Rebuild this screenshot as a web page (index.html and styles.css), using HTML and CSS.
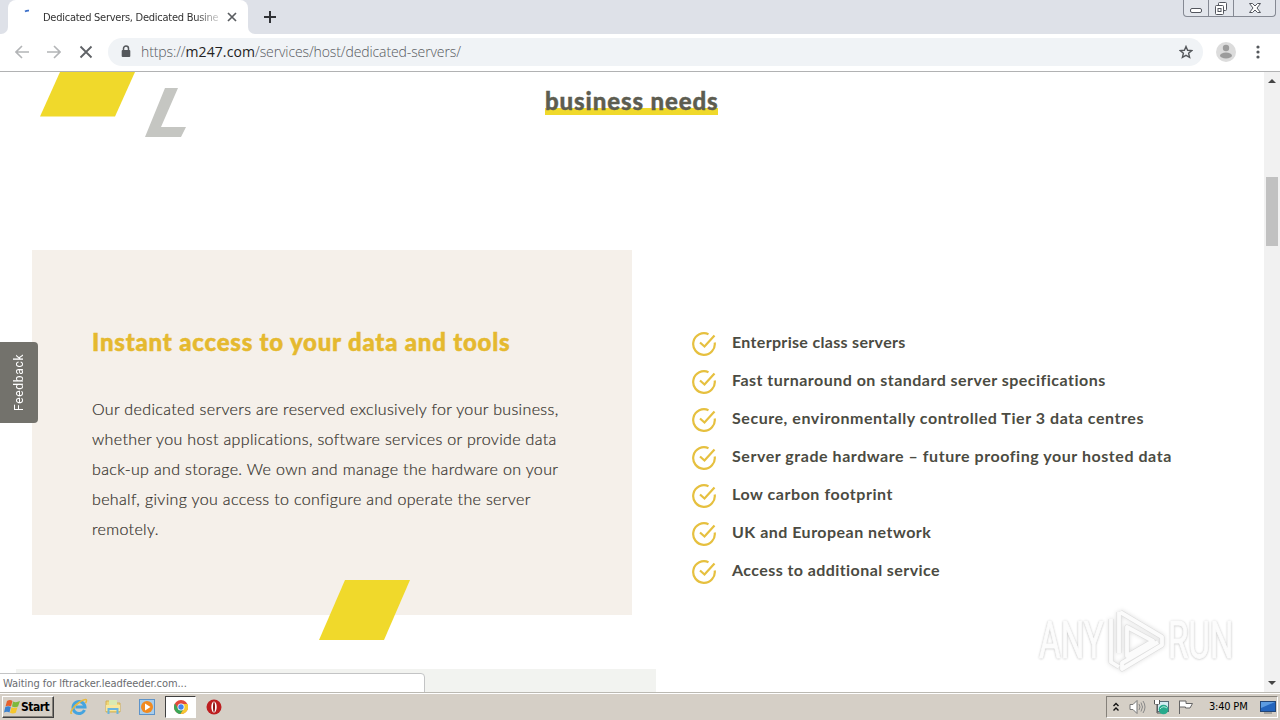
FILE: index.html
```html
<!DOCTYPE html>
<html lang="en">
<head>
    <meta charset="UTF-8">
    <meta name="viewport" content="width=device-width, initial-scale=1.0">
    <title>Dedicated Servers, Dedicated Business Servers</title>
    <link rel="stylesheet" href="styles.css">
</head>
<body>
    <!-- Tab strip -->
    <header class="tab-strip">
        <div class="tab-edge"></div>
        <div class="tab">
            <svg class="spinner" width="16" height="16" viewBox="0 0 16 16"><path d="M6 3.500Q7.500 2.500 10 2.700" fill="none" stroke="#3b6fc9" stroke-width="1.800"/></svg>
            <span class="tab-title">Dedicated Servers, Dedicated Busine</span>
            <svg class="tab-close" width="10" height="10" viewBox="0 0 10 10"><path d="M1 1l8 8M9 1L1 9" stroke="#5a5d61" stroke-width="1.700"/></svg>
        </div>
        <div class="tab-rest">
            <svg width="12" height="12" viewBox="0 0 12 12"><path d="M6 0v12M0 6h12" stroke="#303236" stroke-width="2"/></svg>
        </div>
        <div class="window-buttons">
            <span class="win-btn win-min"><svg width="13" height="17" viewBox="0 0 13 17"><rect x=".5" y="8.500" width="11" height="4" rx="1.500" fill="#fff" stroke="#53565e"/></svg></span>
            <span class="win-btn win-max"><svg width="14" height="17" viewBox="0 0 14 17"><rect x="4.500" y="2.500" width="8" height="8" rx="1" fill="#fff" stroke="#53565e"/><rect x="1.500" y="5.500" width="8" height="9" rx="1" fill="#fff" stroke="#53565e"/><rect x="4" y="8.500" width="3" height="3" fill="none" stroke="#53565e"/></svg></span>
            <span class="win-btn win-close"><svg width="12" height="17" viewBox="0 0 12 17"><path d="M.5 3.500h3L6 6l2.500-2.500h3L8 8l3.500 4.500h-3L6 10l-2.500 2.500h-3L4 8z" fill="#fff" stroke="#53565e"/></svg></span>
        </div>
    </header>

    <!-- Toolbar -->
    <nav class="toolbar">
        <svg class="nav-icon" width="14" height="14" viewBox="0 0 14 14"><path d="M14 7H1M7 1L1 7l6 6" fill="none" stroke="#b3b5b7" stroke-width="1.600"/></svg>
        <svg class="nav-icon" width="14" height="14" viewBox="0 0 14 14"><path d="M0 7h13M7 1l6 6-6 6" fill="none" stroke="#b3b5b7" stroke-width="1.600"/></svg>
        <svg class="nav-icon" width="14" height="14" viewBox="0 0 14 14"><path d="M1.500 1.500l11 11M12.500 1.500l-11 11" stroke="#5f6266" stroke-width="1.800"/></svg>
        <div class="omnibox">
            <svg width="10" height="13" viewBox="0 0 10 13"><path d="M2.500 5.500V3.500a2.500 2.500 0 0 1 5 0v2" fill="none" stroke="#55585c" stroke-width="1.500"/><rect x=".7" y="5" width="8.600" height="7" rx="1" fill="#55585c"/></svg>
            <span class="url">https://<b>m247.com</b>/services/host/dedicated-servers/</span>
            <svg class="star" width="14" height="14" viewBox="1 1 14 14"><path d="M8 2.500l1.600 3.800 4.200.3-3.200 2.700 1 4.100L8 11.300l-3.600 2.100 1-4.100-3.200-2.700 4.200-.3z" fill="none" stroke="#55585c" stroke-width="1.400"/></svg>
        </div>
        <svg class="avatar" width="20" height="20" viewBox="0 0 20 20"><circle cx="10" cy="10" r="10" fill="#dcdcdc"/><circle cx="10" cy="6" r="3.200" fill="#9c9c9c"/><ellipse cx="10" cy="13.500" rx="6" ry="3" fill="#9c9c9c"/></svg>
        <svg class="menu-dots" width="4" height="14" viewBox="0 0 4 14"><circle cx="2" cy="2" r="1.600" fill="#55585c"/><circle cx="2" cy="7" r="1.600" fill="#55585c"/><circle cx="2" cy="12" r="1.600" fill="#55585c"/></svg>
    </nav>

    <!-- Page -->
    <div class="viewport">
        <main class="page">
            <section class="intro">
                <svg class="intro-shapes" width="160" height="66" viewBox="0 0 160 66"><path d="M20 0h75L75 44.500H0z" fill="#f0d92b"/><path d="M125 16h13l-17 39h25l-5 10h-36z" fill="#c5c6c2"/></svg>
                <h2 class="intro-title">business needs</h2>
            </section>

            <section class="features">
                <div class="card">
                    <h3>Instant access to your data and tools</h3>
                    <p>Our dedicated servers are reserved exclusively for your business,<br>
                    whether you host applications, software services or provide data<br>
                    back-up and storage. We own and manage the hardware on your<br>
                    behalf, giving you access to configure and operate the server<br>
                    remotely.</p>
                    <svg class="card-shape" width="91" height="60" viewBox="0 0 91 60"><path d="M26 0h65L65 60H0z" fill="#f0d92b"/></svg>
                </div>
                <ul class="checklist">
                    <li class="first"><svg class="check" viewBox="0 0 24 24"><use href="#tick"/></svg><span>Enterprise class servers</span></li>
                    <li><svg class="check" viewBox="0 0 24 24"><use href="#tick"/></svg><span>Fast turnaround on standard server specifications</span></li>
                    <li class="wide"><svg class="check" viewBox="0 0 24 24"><use href="#tick"/></svg><span>Secure, environmentally controlled Tier 3 data centres</span></li>
                    <li class="wide"><svg class="check" viewBox="0 0 24 24"><use href="#tick"/></svg><span>Server grade hardware – future proofing your hosted data</span></li>
                    <li class="wide"><svg class="check" viewBox="0 0 24 24"><use href="#tick"/></svg><span>Low carbon footprint</span></li>
                    <li><svg class="check" viewBox="0 0 24 24"><use href="#tick"/></svg><span>UK and European network</span></li>
                    <li class="last"><svg class="check" viewBox="0 0 24 24"><use href="#tick"/></svg><span>Access to additional service</span></li>
                </ul>
            </section>

            <section class="next-band"></section>

            <div class="feedback">Feedback</div>
            <div class="status">Waiting for lftracker.leadfeeder.com...</div>

            <div class="watermark">
                <span>ANY</span>
                <svg width="58" height="64" viewBox="0 0 58 64" fill="none" stroke-linejoin="round"><g stroke="#dedede" stroke-width="5"><path d="M12 3v41M4 10v43l8 5M13 3l42 25v8L15 60v-6l36-21M20 18v29l26-15z"/></g><path d="M12 3v41M4 10v43l8 5M13 3l42 25v8L15 60v-6l36-21M20 18v29l26-15z" stroke="#fbfbfb" stroke-width="3.800"/></svg>
                <span>RUN</span>
            </div>
        </main>
        <aside class="scrollbar">
            <svg width="8" height="4" viewBox="0 0 8 4"><path d="M0 4l4-4 4 4z" fill="#454545"/></svg>
            <div class="thumb"></div>
            <svg class="down" width="8" height="4" viewBox="0 0 8 4"><path d="M0 0l4 4 4-4z" fill="#454545"/></svg>
        </aside>
    </div>

    <!-- Taskbar -->
    <footer class="taskbar">
        <div class="start">
            <svg width="17" height="16" viewBox="0 0 17 16"><path d="M3 2q3-2 5.500 0L7 7.500Q4 6 1.500 7.500z" fill="#e6602c"/><path d="M9 2.500q3 1.500 7-.5l-2 5.500q-3 1.500-6 0z" fill="#7db93d"/><path d="M1.300 8q3-1.500 5.500 0l-1.300 5.500Q3 12 0 13.500z" fill="#3c82cf"/><path d="M7.500 8.300q3 1.500 6 0l-1.700 5.500q-3 1.500-5.800 0z" fill="#f5c62c"/></svg>
            Start
        </div>
        <div class="launch">
            <svg width="18" height="18" viewBox="0 0 18 18"><path d="M14.500 12a6 6 0 1 1 .5-3H5.500" fill="none" stroke="#45a4df" stroke-width="3"/><path d="M2 15C-1 17 2 9 9 4.500S18 1 15.500 5" fill="none" stroke="#e9b93b" stroke-width="1.500"/></svg>
            <svg width="18" height="18" viewBox="0 0 18 18"><path d="M2 3h5l1 2h8v9H2z" fill="#f0d777" stroke="#d2b054"/><path d="M5 2h8v5H5z" fill="#d9eab2"/><path d="M2 7h14v6H2z" fill="#f8e79c"/><path d="M4.500 16v-5h9v5" fill="none" stroke="#69b5df" stroke-width="2"/></svg>
            <svg width="18" height="18" viewBox="0 0 18 18"><rect x="1.500" y="1.500" width="15" height="15" fill="#a8cdeb" stroke="#5d93c9"/><circle cx="9" cy="9" r="6" fill="#f18a20"/><path d="M7 5.500v7l5.500-3.500z" fill="#fff"/></svg>
            <span class="active-app"><svg width="14" height="14" viewBox="1 1 14 14"><circle cx="8" cy="8" r="7" fill="#e14a3b"/><path d="M1.900 4.600A7 7 0 0 0 7.500 15L11 9.500 8 8 5 9.500z" fill="#3aa757"/><path d="M14.400 5H8l3 4.500L7.500 15A7 7 0 0 0 14.400 5z" fill="#f6c932"/><circle cx="8" cy="8" r="3.500" fill="#fff"/><circle cx="8" cy="8" r="2.700" fill="#4384ef"/></svg></span>
            <svg width="18" height="18" viewBox="0 0 18 18"><circle cx="9" cy="9" r="7.500" fill="#bd1e20"/><ellipse cx="9" cy="9" rx="2.700" ry="5.500" fill="#fff"/><ellipse cx="9" cy="9" rx="1" ry="5" fill="#8c1515"/></svg>
        </div>
        <div class="tray">
            <svg width="8" height="10" viewBox="0 0 8 10"><path d="M1.500 4L4 1.500 6.500 4M1.500 8.500L4 6l2.500 2.500" fill="none" stroke="#111" stroke-width="1.400"/></svg>
            <svg class="speaker" width="17" height="16" viewBox="0 0 17 16"><path d="M1 5.500h3l4-4v13l-4-4H1z" fill="#fff" stroke="#777"/><path d="M10 5q2 3 0 6M12 3.500q3 4.500 0 9M14 2q4 6 0 12" fill="none" stroke="#888"/></svg>
            <svg class="network" width="17" height="16" viewBox="0 0 17 16"><rect x="4.500" y="2.500" width="11" height="10" fill="#d4edf2" stroke="#586b75"/><path d="M1.500 1v4h5V1M4 5v9h4" fill="none" stroke="#555"/><path d="M2 1h4v4H2z" fill="#fff"/><circle cx="10.500" cy="10.500" r="4.800" fill="#27aa8c"/><path d="M7 10q3-4 7-1" fill="none" stroke="#b2eadb"/></svg>
            <svg class="flag" width="17" height="16" viewBox="0 0 17 16"><path d="M2.500 15V1.500M3 2h6v2.500h6.500L13 9H8.500V8H3" fill="#fff" stroke="#666"/></svg>
            <span class="clock">3:40 PM</span>
            <svg class="desktop" width="16" height="14" viewBox="0 0 16 14"><rect x=".5" y="1.500" width="15" height="10" fill="#2465bd" stroke="#234676"/><path d="M1 2h14L1 8z" fill="#5d9ce1"/><path d="M4 13h8" stroke="#777"/></svg>
        </div>
    </footer>

    <svg class="defs" width="0" height="0">
        <defs>
            <g id="tick" fill="none" stroke="#e6c03f" stroke-width="2.200">
                <path d="M16.500 2.200A10.800 10.800 0 1 0 22.700 10.500"/>
                <path d="M8 10.500l4.500 4L22.500 3.500"/>
            </g>
        </defs>
    </svg>
</body>
</html>
```
FILE: styles.css
```css
* {
    box-sizing: border-box;
}
body {
    margin: 0;
    width: 1280px;
    height: 720px;
    overflow: hidden;
    display: flex;
    flex-direction: column;
    background: #fff;
    font-family: "DejaVu Sans Condensed", "DejaVu Sans", sans-serif;
    font-size: 11px;
}
svg {
    display: block;
    flex: none;
}
.defs {
    position: absolute;
}

/* Tab strip */
.tab-strip {
    height: 34px;
    flex: none;
    display: flex;
    background: #fff;
}
.tab-edge {
    width: 8px;
    background: #dee1e8;
    border-bottom-right-radius: 7px;
}
.tab {
    width: 240px;
    background: #fff;
    border-radius: 8px 8px 0 0;
    display: flex;
    align-items: center;
    padding-left: 11px;
    box-shadow: 0 -9px 0 #dee1e8;
}
.spinner {
    margin-top: -2px;
}
.tab-title {
    width: 177px;
    margin-left: 8px;
    white-space: nowrap;
    color: #333;
    letter-spacing: -0.26px;
    -webkit-mask-image: linear-gradient(to right, #000 86%, rgba(0,0,0,0.15));
    mask-image: linear-gradient(to right, #000 86%, rgba(0,0,0,0.15));
}
.tab-close {
    margin-left: 7px;
}
.tab-rest {
    flex: 1;
    background: #dee1e8;
    border-bottom-left-radius: 7px;
    padding: 11px 0 0 16px;
}
.window-buttons {
    background: #dee1e8;
    width: 97px;
    display: flex;
    align-items: flex-start;
}
.win-btn {
    height: 17px;
    border: 1px solid #858993;
    border-top: none;
    border-left-width: 0;
    display: flex;
    justify-content: center;
    background: #e3e6ec;
}
.win-min {
    width: 26px;
    border-left-width: 1px;
    border-bottom-left-radius: 4px;
}
.win-max {
    width: 25px;
}
.win-close {
    width: 42px;
    border-bottom-right-radius: 4px;
}

/* Toolbar */
.toolbar {
    height: 38px;
    flex: none;
    display: flex;
    align-items: center;
    padding-left: 15px;
    padding-bottom: 2px;
    border-bottom: 1px solid #b1b2b3;
}
.nav-icon {
    margin-right: 18px;
}
.omnibox {
    width: 1095px;
    height: 28px;
    margin-left: -3px;
    border-radius: 14px;
    background: #f0f3f6;
    display: flex;
    align-items: center;
    padding: 0 10px 0 13px;
}
.url {
    margin-left: 10px;
    font-family: "Open Sans", sans-serif;
    font-weight: 300;
    font-size: 14px;
    letter-spacing: -0.11px;
    color: #56595d;
}
.url b {
    font-weight: 400;
    letter-spacing: 0.1px;
    color: #222;
}
.star {
    margin-left: auto;
}
.avatar {
    margin-left: 13px;
}
.menu-dots {
    margin-left: 20px;
}

/* Page */
.viewport {
    height: 620px;
    flex: none;
    display: flex;
}
.page {
    position: relative;
    width: 1264px;
    overflow: hidden;
    font-family: Lato, sans-serif;
}
.intro {
    height: 178px;
    display: flex;
    align-items: flex-start;
}
.intro-shapes {
    margin-left: 40px;
}
.intro-title {
    margin: 15px 0 0 345px;
    height: 28px;
    width: 173px;
    white-space: nowrap;
    font-size: 24px;
    line-height: 27px;
    font-weight: 900;
    letter-spacing: 0.88px;
    -webkit-text-stroke: 0.4px #5d5d50;
    color: #5d5d50;
    background: linear-gradient(#f0d92b, #f0d92b) 0 21px / 100% 7px no-repeat;
}
.features {
    display: flex;
    padding-left: 32px;
}
.card {
    position: relative;
    width: 600px;
    height: 365px;
    padding: 76px 0 0 60px;
    background: #f5f0ea;
}
.card h3 {
    margin: 0;
    font-size: 24px;
    line-height: 31px;
    font-weight: 900;
    letter-spacing: 0.79px;
    -webkit-text-stroke: 0.5px #e5b92f;
    color: #e5b92f;
    white-space: nowrap;
}
.card p {
    margin: 37px 0 0;
    font-size: 16px;
    line-height: 30px;
    font-weight: 300;
    letter-spacing: 0.35px;
    -webkit-text-stroke: 0.2px #35322c;
    color: #35322c;
    white-space: nowrap;
}
.card-shape {
    position: absolute;
    left: 287px;
    bottom: -25px;
}
.checklist {
    list-style: none;
    margin: 74px 0 0 60px;
    padding: 0;
}
.checklist li {
    height: 38px;
    display: flex;
    align-items: center;
    gap: 16px;
    font-size: 16px;
    font-weight: 700;
    letter-spacing: 0.48px;
    color: #4b4b42;
    white-space: nowrap;
}
.checklist .first {
    letter-spacing: 0.32px;
}
.checklist .wide {
    letter-spacing: 0.55px;
}
.checklist .last {
    letter-spacing: 0.42px;
}
.check {
    width: 24px;
    height: 24px;
    margin-top: 1px;
}
.checklist span {
    margin-top: -3px;
}
.next-band {
    width: 640px;
    height: 30px;
    margin: 54px 0 0 16px;
    background: #f2f3f0;
}
.feedback {
    position: absolute;
    left: 0;
    top: 270px;
    width: 38px;
    height: 81px;
    background: #73726c;
    color: #fff;
    font: 12px/38px Roboto, sans-serif;
    letter-spacing: 0.7px;
    text-align: center;
    writing-mode: vertical-rl;
    transform: rotate(180deg);
    border-radius: 4px 0 0 4px;
}
.status {
    position: absolute;
    left: -1px;
    bottom: -1px;
    width: 426px;
    height: 20px;
    padding-left: 3px;
    border: 1px solid #c3c4c5;
    border-top-right-radius: 4px;
    background: #fff;
    color: #6a6c6f;
    font: 11px/20px "DejaVu Sans Condensed", sans-serif;
    letter-spacing: -0.06px;
}
.watermark {
    position: absolute;
    left: 1039px;
    top: 536px;
    display: flex;
    align-items: center;
    font: 51px/66px Roboto, sans-serif;
    color: #fcfcfc;
    -webkit-text-stroke: 1px #fcfcfc;
    text-shadow: 0 0 3px #bcbcbc, 0 1px 3px #d5d5d5;
}
.watermark span {
    width: 68px;
    transform: scaleX(0.65);
    transform-origin: left;
}
.watermark svg {
    margin-right: 3px;
    filter: drop-shadow(0 0 2px #ddd);
}
.scrollbar {
    width: 16px;
    background: #f1f1f1;
    display: flex;
    flex-direction: column;
    align-items: center;
    padding: 7px 0;
}
.thumb {
    width: 12px;
    height: 69px;
    margin-top: 94px;
    background: #c1c1c1;
}
.down {
    margin-top: auto;
}

/* Taskbar */
.taskbar {
    height: 28px;
    flex: none;
    display: flex;
    align-items: center;
    border-top: 1px solid #bbb9b2;
    box-shadow: inset 0 1px 0 #fff;
    background: #d5cfc6;
    padding: 0 2px;
}
.start {
    width: 52px;
    height: 22px;
    display: flex;
    align-items: center;
    padding-left: 1px;
    border: 1px solid;
    border-color: #fff #404040 #404040 #fff;
    box-shadow: inset -1px -1px 0 #85817a;
    font-weight: bold;
    font-size: 12px;
    letter-spacing: -0.5px;
}
.launch {
    display: flex;
    align-items: center;
    margin-left: 16px;
    gap: 16px;
}
.active-app {
    width: 31px;
    height: 22px;
    margin: 0 -7px;
    display: flex;
    align-items: center;
    justify-content: center;
    background: #fff;
    border: 1px solid;
    border-color: #404040 #fff #fff #404040;
}
.tray {
    width: 172px;
    height: 22px;
    margin-left: auto;
    display: flex;
    align-items: center;
    padding-left: 5px;
    border: 1px solid;
    border-color: #85817a #fff #fff #85817a;
}
.speaker {
    margin-left: 9px;
}
.network {
    margin-left: 7px;
}
.flag {
    margin-left: 7px;
}
.clock {
    width: 39px;
    margin-left: 15px;
    white-space: nowrap;
    letter-spacing: -0.2px;
}
.desktop {
    margin-left: 12px;
}
```
